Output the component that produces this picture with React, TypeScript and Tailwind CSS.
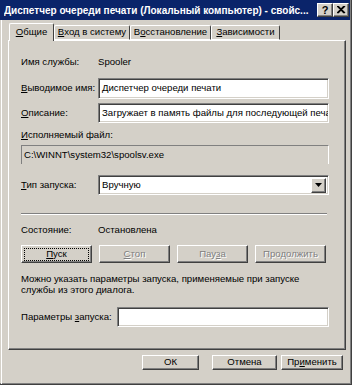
import React from 'react';

const sunken =
  'border border-t-[#808080] border-l-[#808080] border-b-white border-r-white shadow-[inset_1px_1px_0_#404040,inset_-1px_-1px_0_#d4d0c8]';
const raised =
  'border border-t-white border-l-white border-b-[#404040] border-r-[#404040] shadow-[inset_-1px_-1px_0_#808080]';

const U: React.FC<{ children: React.ReactNode }> = ({ children }) => <span className="underline underline-offset-1">{children}</span>;

const Btn: React.FC<{ w: string; disabled?: boolean; focus?: boolean; children: React.ReactNode }> = ({ w, disabled, focus, children }) => (
  <div className={`${w} h-[18px] bg-[#d4d0c8] ${raised} flex items-center justify-center`}>
    <div
      className={`px-[3px] leading-[12px] ${focus ? 'w-[calc(100%-4px)] h-[13px] border border-dotted border-black flex items-center justify-center' : ''} ${
        disabled ? 'text-[#808080] [text-shadow:1px_1px_0_#fff]' : 'text-black'
      }`}
    >
      {children}
    </div>
  </div>
);

export default function App() {
  return (
    <div className="w-[352px] h-[385px] bg-[#d4d0c8] border-r border-b border-r-[#404040] border-b-[#404040] shadow-[inset_-1px_-1px_0_#808080] font-['Liberation_Sans',Arial,sans-serif] text-[9.6px] text-black overflow-hidden">
      {/* Title bar */}
      <div className="h-[20px] mr-[1px] bg-[#0a246a] flex items-center pl-[4px] pr-[1px]">
        <div className="flex-1 min-w-0 mr-[4px] text-white font-bold text-[10px] whitespace-nowrap overflow-hidden">
          Диспетчер очереди печати (Локальный компьютер) - свойс...
        </div>
        <div className={`w-[16px] h-[14px] bg-[#d4d0c8] ${raised} flex items-center justify-center font-bold text-[11px] leading-none`}>?</div>
        <div className={`w-[16px] h-[14px] bg-[#d4d0c8] ${raised} flex items-center justify-center`}>
          <svg width="9" height="8" viewBox="0 0 9 8">
            <path d="M1 0 L8 7 M0 0 L7 7 M7 0 L0 7 M8 0 L1 7" stroke="#000" strokeWidth="1.2" />
          </svg>
        </div>
      </div>

      <div className="ml-[1px] border-l border-white h-[364px] pt-[2px]">
        {/* Tabs */}
        <div className="flex items-end h-[18px] pl-[7px] relative z-10">
          <div className="w-[45px] h-[18px] mb-[-1px] bg-[#d4d0c8] border-t border-l border-white border-r border-r-[#404040] rounded-t-[2px] flex items-center justify-center pb-[1px]">
            <U>О</U>бщие
          </div>
          <div className="w-[76px] h-[15px] bg-[#d4d0c8] border-t border-l border-white border-r border-r-[#404040] rounded-t-[2px] flex items-center justify-center border-b border-b-white">
            <U>В</U>ход в систему
          </div>
          <div className="w-[81px] h-[15px] bg-[#d4d0c8] border-t border-l border-white border-r border-r-[#404040] rounded-t-[2px] flex items-center justify-center border-b border-b-white">
            В<U>о</U>сстановление
          </div>
          <div className="w-[69px] h-[15px] bg-[#d4d0c8] border-t border-l border-white border-r border-r-[#404040] rounded-t-[2px] flex items-center justify-center border-b border-b-white">
            <U>З</U>ависимости
          </div>
        </div>

        {/* Panel */}
        <div className={`ml-[6px] w-[338px] h-[310px] ${raised} pl-[12px] pr-[16px]`}>
          <div className="flex mt-[15px] h-[13px] items-center">
            <div className="w-[77px]">Имя службы:</div>
            <div>Spooler</div>
          </div>
          <div className="flex mt-[9px] items-center">
            <div className="w-[77px] whitespace-nowrap overflow-hidden">
              <U>В</U>ыводимое имя:
            </div>
            <div className={`flex-1 h-[21px] bg-white ${sunken} flex items-center pl-[3px] whitespace-nowrap overflow-hidden`}>
              Диспетчер очереди печати
            </div>
          </div>
          <div className="flex mt-[4px] items-center">
            <div className="w-[77px]">
              <U>О</U>писание:
            </div>
            <div className={`flex-1 h-[20px] bg-white ${sunken} flex items-center pl-[3px] whitespace-nowrap overflow-hidden`}>
              Загружает в память файлы для последующей печати
            </div>
          </div>
          <div className="mt-[6px] h-[13px] flex items-center">
            <U>И</U>сполняемый файл:
          </div>
          <div className="mt-[3px] h-[19px] border-t border-l border-t-[#808080] border-l-[#808080] border-r border-r-white flex items-center pl-[2px] text-black">
            C:\WINNT\system32\spoolsv.exe
          </div>
          <div className="flex mt-[11px] items-center">
            <div className="w-[77px]">
              <U>Т</U>ип запуска:
            </div>
            <div className={`flex-1 h-[20px] bg-white ${sunken} flex items-center pl-[3px] pr-[2px]`}>
              <div className="flex-1">Вручную</div>
              <div className={`w-[15px] h-[15px] bg-[#d4d0c8] ${raised} flex items-center justify-center`}>
                <svg width="7" height="4" viewBox="0 0 7 4">
                  <path d="M0 0 H7 L3.5 4 Z" fill="#000" />
                </svg>
              </div>
            </div>
          </div>
          <div className="mt-[18px] h-[2px] border-t border-t-[#808080] border-b border-b-white mr-[2px]" />
          <div className="flex mt-[9px] h-[13px] items-center">
            <div className="w-[77px]">Состояние:</div>
            <div>Остановлена</div>
          </div>
          <div className="flex mt-[8px] gap-[7px]">
            <Btn w="w-[71px]" focus>
              <U>П</U>уск
            </Btn>
            <Btn w="w-[71px]" disabled>
              <U>С</U>топ
            </Btn>
            <Btn w="w-[71px]" disabled>
              Пау<U>з</U>а
            </Btn>
            <Btn w="w-[71px]" disabled>
              Про<U>д</U>олжить
            </Btn>
          </div>
          <div className="mt-[10px] leading-[11px]">
            Можно указать параметры запуска, применяемые при запуске
            <br />
            службы из этого диалога.
          </div>
          <div className="flex mt-[12px] items-center">
            <div className="w-[96px] whitespace-nowrap">
              Параметры <U>з</U>апуска:
            </div>
            <div className={`flex-1 h-[20px] bg-white ${sunken}`} />
          </div>
        </div>

        {/* Dialog buttons */}
        <div className="flex mt-[5px] pl-[140px]">
          <div className={`w-[57px] h-[15px] bg-[#d4d0c8] ${raised} flex items-center justify-center`}>ОК</div>
          <div className={`w-[65px] h-[15px] ml-[13px] bg-[#d4d0c8] ${raised} flex items-center justify-center`}>Отмена</div>
          <div className={`w-[62px] h-[15px] ml-[4px] bg-[#d4d0c8] ${raised} flex items-center justify-center`}>
            Пр<U>и</U>менить
          </div>
        </div>
      </div>
    </div>
  );
}
